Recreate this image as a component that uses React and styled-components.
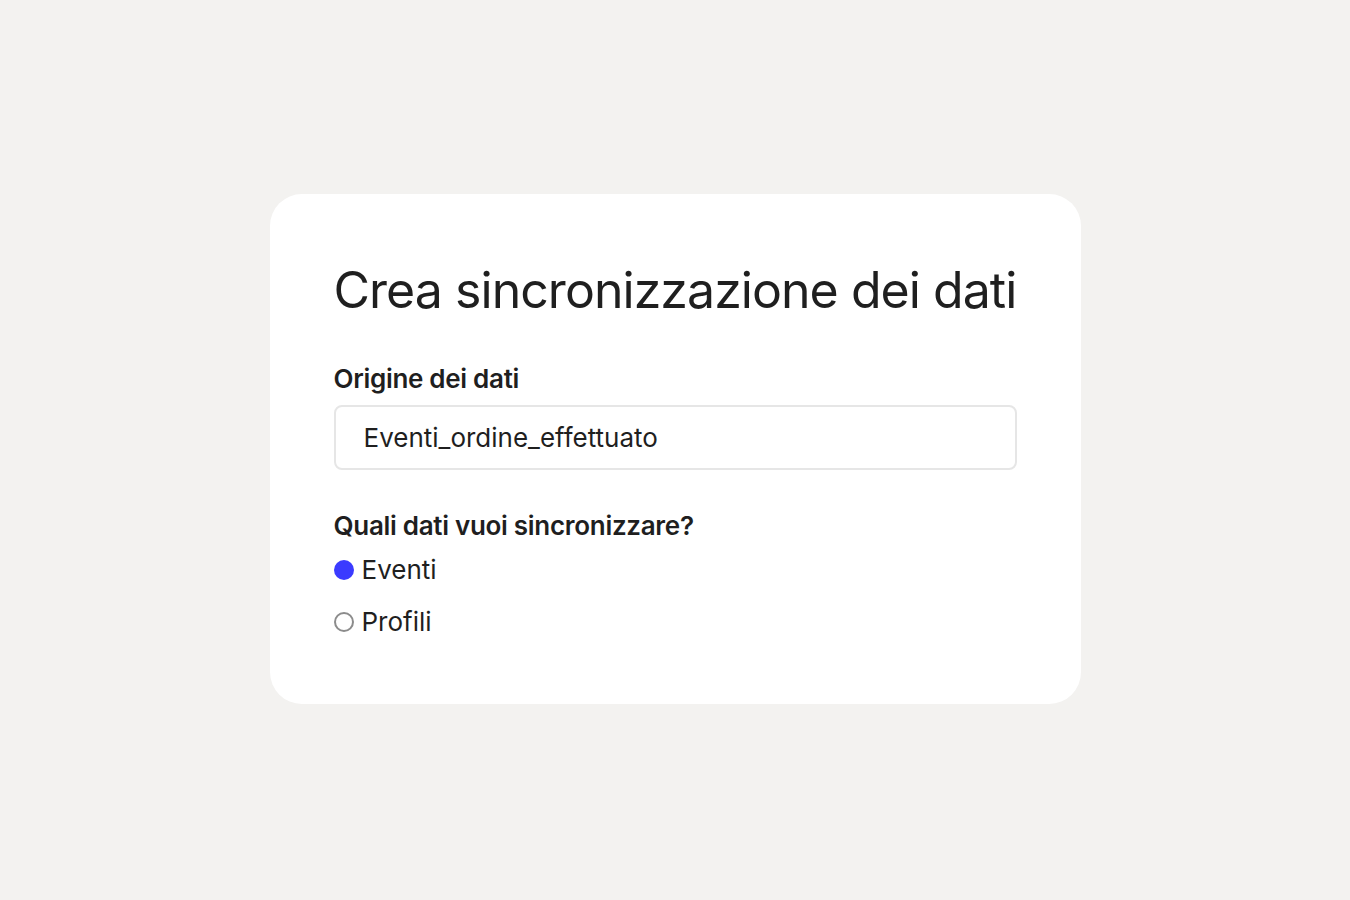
import React, { useState } from 'react';
import styled, { createGlobalStyle } from 'styled-components';

const GlobalStyle = createGlobalStyle`
  html, body {
    margin: 0;
    padding: 0;
    background-color: #f3f2f0;
    font-family: Inter, "Noto Sans", "Liberation Sans", sans-serif;
    color: #1f1f1f;
  }
`;

const Page = styled.main`
  min-height: 900px;
  display: flex;
  justify-content: center;
  align-items: center;
  padding-bottom: 2px;
  box-sizing: border-box;
`;

const Card = styled.section`
  width: 811px;
  height: 510px;
  box-sizing: border-box;
  padding: 66px 64px 0;
  background-color: #ffffff;
  border-radius: 32px;
  display: flex;
  flex-direction: column;
`;

const Title = styled.h1`
  margin: 0 0 43px;
  font-size: 50px;
  font-weight: 400;
  line-height: 60px;
  letter-spacing: -0.95px;
  white-space: nowrap;
  color: #1f1f1f;
`;

const Label = styled.label`
  display: block;
  font-size: 26px;
  font-weight: 600;
  line-height: 32px;
  letter-spacing: -0.3px;
  margin-bottom: 10px;
`;

const Input = styled.input`
  display: block;
  width: 100%;
  height: 65px;
  box-sizing: border-box;
  padding: 0 28px;
  border: 2px solid #e6e6e6;
  border-radius: 8px;
  font-family: inherit;
  font-size: 26px;
  color: #1f1f1f;
  background: #ffffff;
  outline: none;
  margin-bottom: 40px;
`;

const Options = styled.div`
  display: flex;
  flex-direction: column;
  gap: 20px;
  margin-top: 2px;
`;

const Option = styled.label`
  display: flex;
  align-items: center;
  gap: 8px;
  font-size: 26px;
  line-height: 32px;
  cursor: pointer;
`;

const Radio = styled.span`
  width: 20px;
  height: 20px;
  box-sizing: border-box;
  border-radius: 50%;
  border: ${({ $checked }) => ($checked ? 'none' : '2px solid #8c8c8c')};
  background-color: ${({ $checked }) => ($checked ? '#3b3bff' : '#ffffff')};
  flex-shrink: 0;
`;

const options = ['Eventi', 'Profili'];

export default function App() {
  const [selected, setSelected] = useState('Eventi');

  return (
    <>
      <GlobalStyle />
      <Page>
        <Card>
          <Title>Crea sincronizzazione dei dati</Title>
          <Label htmlFor="origine">Origine dei dati</Label>
          <Input id="origine" defaultValue="Eventi_ordine_effettuato" />
          <Label as="div">Quali dati vuoi sincronizzare?</Label>
          <Options>
            {options.map((opt) => (
              <Option key={opt} onClick={() => setSelected(opt)}>
                <Radio $checked={selected === opt} />
                {opt}
              </Option>
            ))}
          </Options>
        </Card>
      </Page>
    </>
  );
}
